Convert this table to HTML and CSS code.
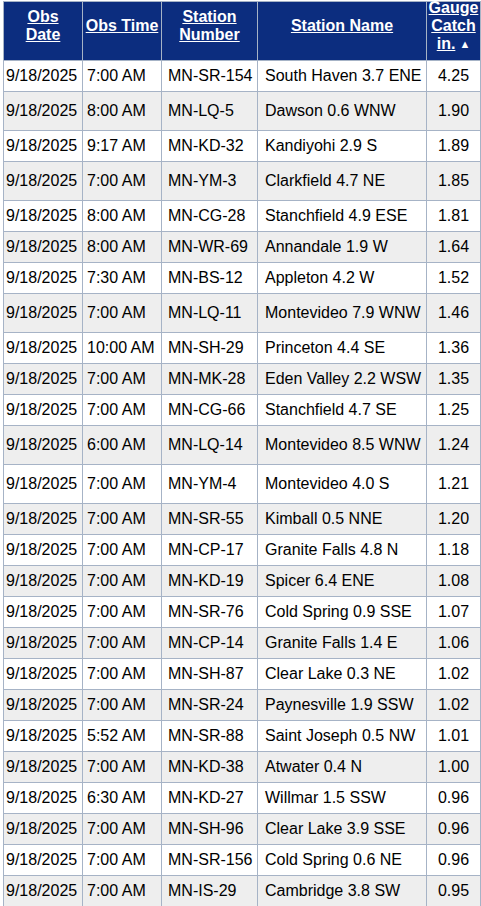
FILE: index.html
```html
<!DOCTYPE html>
<html>
<head>
    <title>Gauge Catch Report</title>
    <link rel="stylesheet" href="styles.css">
</head>
<body>
    <table class="obs-table">
        <colgroup>
            <col class="c-date">
            <col class="c-time">
            <col class="c-num">
            <col class="c-name">
            <col class="c-catch">
        </colgroup>
        <thead>
            <tr>
                <th><div class="hd"><span><a href="#">Obs<br>Date</a></span></div></th>
                <th><div class="hd"><span><a href="#">Obs Time</a></span></div></th>
                <th><div class="hd"><span><a href="#">Station<br>Number</a></span></div></th>
                <th><div class="hd"><span><a href="#">Station Name</a></span></div></th>
                <th><div class="hd"><span><a href="#">Gauge<br>Catch<br>in.</a><span class="sort">&#9650;</span></span></div></th>
            </tr>
        </thead>
        <tbody>
            <tr><td>9/18/2025</td><td>7:00 AM</td><td>MN-SR-154</td><td>South Haven 3.7 ENE</td><td>4.25</td></tr>
            <tr class="tall"><td>9/18/2025</td><td>8:00 AM</td><td>MN-LQ-5</td><td>Dawson 0.6 WNW</td><td>1.90</td></tr>
            <tr><td>9/18/2025</td><td>9:17 AM</td><td>MN-KD-32</td><td>Kandiyohi 2.9 S</td><td>1.89</td></tr>
            <tr class="tall"><td>9/18/2025</td><td>7:00 AM</td><td>MN-YM-3</td><td>Clarkfield 4.7 NE</td><td>1.85</td></tr>
            <tr><td>9/18/2025</td><td>8:00 AM</td><td>MN-CG-28</td><td>Stanchfield 4.9 ESE</td><td>1.81</td></tr>
            <tr><td>9/18/2025</td><td>8:00 AM</td><td>MN-WR-69</td><td>Annandale 1.9 W</td><td>1.64</td></tr>
            <tr><td>9/18/2025</td><td>7:30 AM</td><td>MN-BS-12</td><td>Appleton 4.2 W</td><td>1.52</td></tr>
            <tr class="tall"><td>9/18/2025</td><td>7:00 AM</td><td>MN-LQ-11</td><td>Montevideo 7.9 WNW</td><td>1.46</td></tr>
            <tr><td>9/18/2025</td><td>10:00 AM</td><td>MN-SH-29</td><td>Princeton 4.4 SE</td><td>1.36</td></tr>
            <tr><td>9/18/2025</td><td>7:00 AM</td><td>MN-MK-28</td><td>Eden Valley 2.2 WSW</td><td>1.35</td></tr>
            <tr><td>9/18/2025</td><td>7:00 AM</td><td>MN-CG-66</td><td>Stanchfield 4.7 SE</td><td>1.25</td></tr>
            <tr class="tall"><td>9/18/2025</td><td>6:00 AM</td><td>MN-LQ-14</td><td>Montevideo 8.5 WNW</td><td>1.24</td></tr>
            <tr class="tall"><td>9/18/2025</td><td>7:00 AM</td><td>MN-YM-4</td><td>Montevideo 4.0 S</td><td>1.21</td></tr>
            <tr><td>9/18/2025</td><td>7:00 AM</td><td>MN-SR-55</td><td>Kimball 0.5 NNE</td><td>1.20</td></tr>
            <tr><td>9/18/2025</td><td>7:00 AM</td><td>MN-CP-17</td><td>Granite Falls 4.8 N</td><td>1.18</td></tr>
            <tr><td>9/18/2025</td><td>7:00 AM</td><td>MN-KD-19</td><td>Spicer 6.4 ENE</td><td>1.08</td></tr>
            <tr><td>9/18/2025</td><td>7:00 AM</td><td>MN-SR-76</td><td>Cold Spring 0.9 SSE</td><td>1.07</td></tr>
            <tr><td>9/18/2025</td><td>7:00 AM</td><td>MN-CP-14</td><td>Granite Falls 1.4 E</td><td>1.06</td></tr>
            <tr><td>9/18/2025</td><td>7:00 AM</td><td>MN-SH-87</td><td>Clear Lake 0.3 NE</td><td>1.02</td></tr>
            <tr><td>9/18/2025</td><td>7:00 AM</td><td>MN-SR-24</td><td>Paynesville 1.9 SSW</td><td>1.02</td></tr>
            <tr><td>9/18/2025</td><td>5:52 AM</td><td>MN-SR-88</td><td>Saint Joseph 0.5 NW</td><td>1.01</td></tr>
            <tr><td>9/18/2025</td><td>7:00 AM</td><td>MN-KD-38</td><td>Atwater 0.4 N</td><td>1.00</td></tr>
            <tr><td>9/18/2025</td><td>6:30 AM</td><td>MN-KD-27</td><td>Willmar 1.5 SSW</td><td>0.96</td></tr>
            <tr><td>9/18/2025</td><td>7:00 AM</td><td>MN-SH-96</td><td>Clear Lake 3.9 SSE</td><td>0.96</td></tr>
            <tr><td>9/18/2025</td><td>7:00 AM</td><td>MN-SR-156</td><td>Cold Spring 0.6 NE</td><td>0.96</td></tr>
            <tr><td>9/18/2025</td><td>7:00 AM</td><td>MN-IS-29</td><td>Cambridge 3.8 SW</td><td>0.95</td></tr>
        </tbody>
    </table>
</body>
</html>
```

FILE: styles.css
```css
body {
    font-family: "Liberation Sans", Arial, sans-serif;
    font-size: 16px;
    color: #000;
    background-color: #fff;
    margin: 0;
    padding: 1px 0 0 3px;
}
.obs-table {
    border-collapse: collapse;
    table-layout: fixed;
    width: 477px;
    border: 1px solid #a6b3c6;
}
.c-date { width: 79px; }
.c-time { width: 79px; }
.c-num { width: 96px; }
.c-name { width: 169px; }
.c-catch { width: 54px; }
.obs-table th {
    background-color: #0c2d7f;
    border: 1px solid #a6b3c6;
    border-top: none;
    color: #fff;
    font-weight: bold;
    height: 46px;
    padding: 1px 0 11px;
    vertical-align: top;
}
.obs-table th .hd {
    height: 46px;
    display: flex;
    align-items: center;
    justify-content: center;
    text-align: center;
    line-height: 18px;
}
.obs-table th a {
    color: #fff;
    text-decoration: underline;
}
.obs-table th .sort {
    font-size: 11px;
    margin-left: 4px;
    vertical-align: 1px;
}
.obs-table td {
    border: 1px solid #a6b3c6;
    height: 30px;
    padding: 0;
    line-height: 18px;
    white-space: nowrap;
    overflow: hidden;
}
.obs-table tbody tr:nth-child(even) td {
    background-color: #eeeeee;
}
.obs-table tr.tall td {
    height: 38px;
}
.obs-table td:nth-child(1) { padding-left: 2px; }
.obs-table td:nth-child(2) { padding-left: 4px; }
.obs-table td:nth-child(3) { padding-left: 6px; }
.obs-table td:nth-child(4) { padding-left: 7px; }
.obs-table td:nth-child(5) { text-align: center; }
```
